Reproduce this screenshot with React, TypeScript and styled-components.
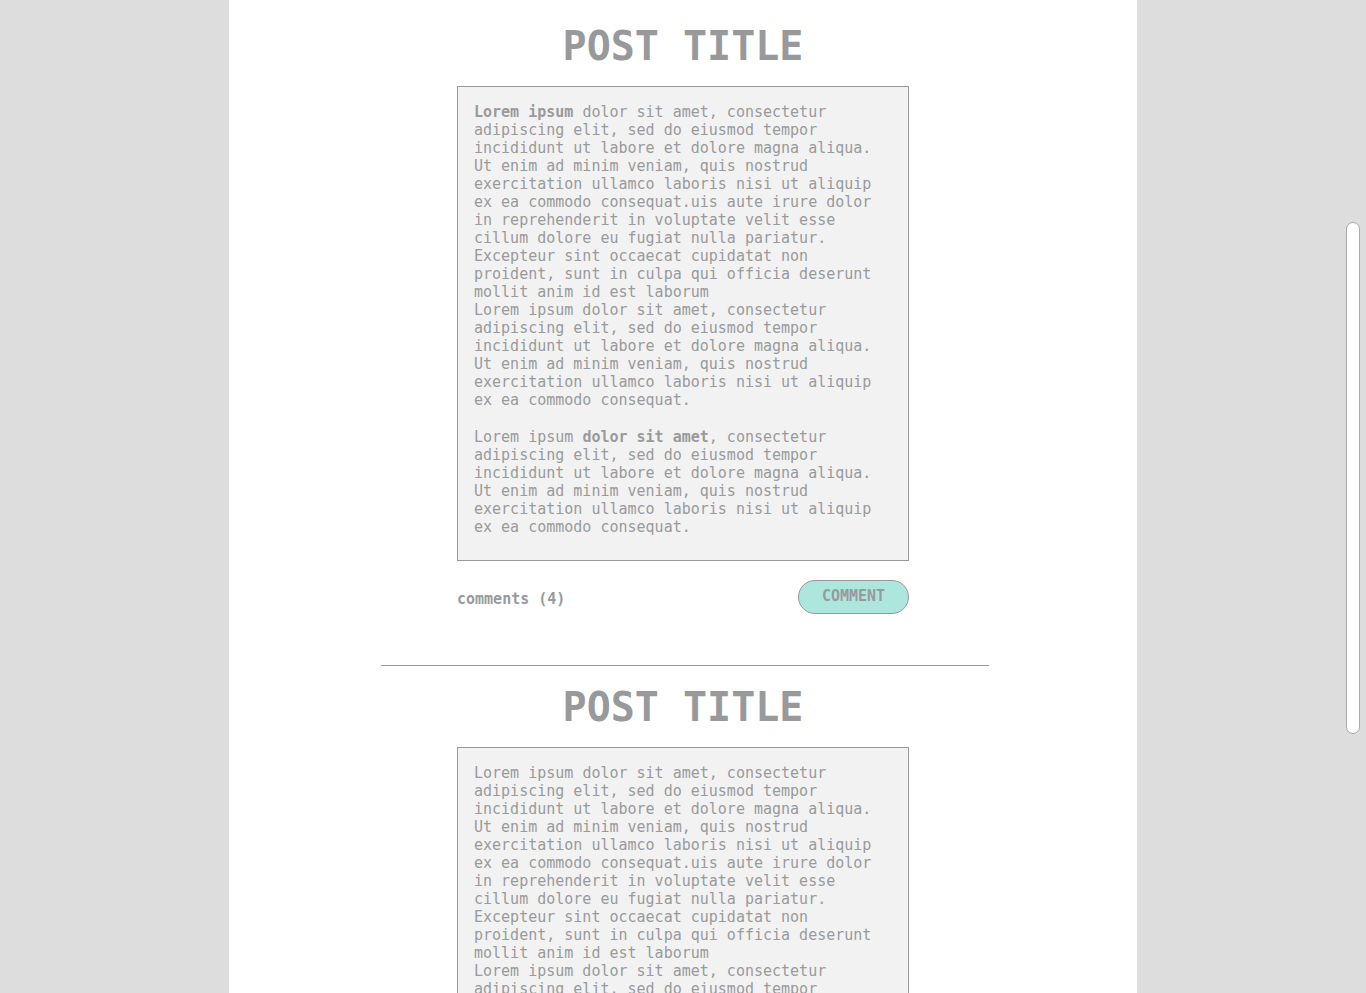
import * as React from 'react';
import styled, { createGlobalStyle } from 'styled-components';

const GlobalStyle = createGlobalStyle`
  html, body {
    margin: 0;
    padding: 0;
    height: 100%;
    overflow: hidden;
    background: #dddddd;
  }
  body {
    font-family: "DejaVu Sans Mono", "Liberation Mono", monospace;
    color: #999a9b;
  }
`;

type PostData = {
    title: string;
    comments: number;
    lead?: boolean;
}

const LOREM_A = 'dolor sit amet, consectetur adipiscing elit, sed do eiusmod tempor incididunt ut labore et dolore magna aliqua. Ut enim ad minim veniam, quis nostrud exercitation ullamco laboris nisi ut aliquip ex ea commodo consequat.uis aute irure dolor in reprehenderit in voluptate velit esse cillum dolore eu fugiat nulla pariatur. Excepteur sint occaecat cupidatat non proident, sunt in culpa qui officia deserunt mollit anim id est laborum';
const LOREM_B = 'Lorem ipsum dolor sit amet, consectetur adipiscing elit, sed do eiusmod tempor incididunt ut labore et dolore magna aliqua. Ut enim ad minim veniam, quis nostrud exercitation ullamco laboris nisi ut aliquip ex ea commodo consequat.';
const LOREM_C = ', consectetur adipiscing elit, sed do eiusmod tempor incididunt ut labore et dolore magna aliqua. Ut enim ad minim veniam, quis nostrud exercitation ullamco laboris nisi ut aliquip ex ea commodo consequat.';

const posts: Array<PostData> = [
    { title: 'POST TITLE', comments: 4, lead: true },
    { title: 'POST TITLE', comments: 4 },
];

const Post = ({ title, comments, lead }: PostData) => {
    return (
        <Article>
            <Title>{title}</Title>
            <Body>
                <Para>
                    {lead ? <><b>Lorem ipsum</b> {LOREM_A}</> : <>Lorem ipsum {LOREM_A}</>}
                    <br />
                    {LOREM_B}
                </Para>
                <Para>
                    Lorem ipsum {lead ? <b>dolor sit amet</b> : 'dolor sit amet'}{LOREM_C}
                </Para>
            </Body>
            <Footer>
                <Comments>comments ({comments})</Comments>
                <CommentButton>COMMENT</CommentButton>
            </Footer>
        </Article>
    )
}

const App = () => {
    return (
        <>
            <GlobalStyle />
            <Column>
                {posts.map((post, i) =>
                    <React.Fragment key={i}>
                        {i > 0 && <Divider />}
                        <Post {...post} />
                    </React.Fragment>
                )}
            </Column>
            <ScrollThumb />
        </>
    )
}

export default App

const Column = styled.main`
  width: 908px;
  min-height: 100vh;
  margin: 0 auto;
  background: #ffffff;
  padding-top: 22px;
  box-sizing: border-box;
`;
const Article = styled.article`
  width: 452px;
  margin: 0 auto;
`;
const Title = styled.h1`
  margin: 0 0 16px;
  font-size: 40px;
  line-height: 48px;
  font-weight: bold;
  text-align: center;
  color: #97999b;
`;
const Body = styled.div`
  background: #f2f2f2;
  border: 1px solid #999999;
  padding: 16px 16px 24px;
  font-size: 15px;
  line-height: 18px;
`;
const Para = styled.p`
  margin: 0 0 19px;
  &:last-child {
    margin-bottom: 0;
  }
`;
const Footer = styled.div`
  display: flex;
  justify-content: space-between;
  align-items: center;
  margin-top: 19px;
  margin-bottom: 51px;
`;
const Comments = styled.span`
  font-size: 15px;
  font-weight: bold;
  padding-top: 3px;
`;
const CommentButton = styled.button`
  width: 111px;
  height: 34px;
  border-radius: 17px;
  border: 1px solid #999999;
  background: #ade6dd;
  color: #999a9b;
  font-family: inherit;
  font-size: 15px;
  font-weight: bold;
  padding: 0 0 3px;
  cursor: pointer;
`;
const Divider = styled.hr`
  width: 608px;
  margin: 0 0 17px 152px;
  border: none;
  border-top: 1px solid #999999;
  height: 0;
`;
const ScrollThumb = styled.div`
  position: fixed;
  top: 222px;
  right: 6px;
  width: 12px;
  height: 510px;
  background: #ffffff;
  border: 1px solid #a8a8a8;
  border-radius: 7px;
`;
